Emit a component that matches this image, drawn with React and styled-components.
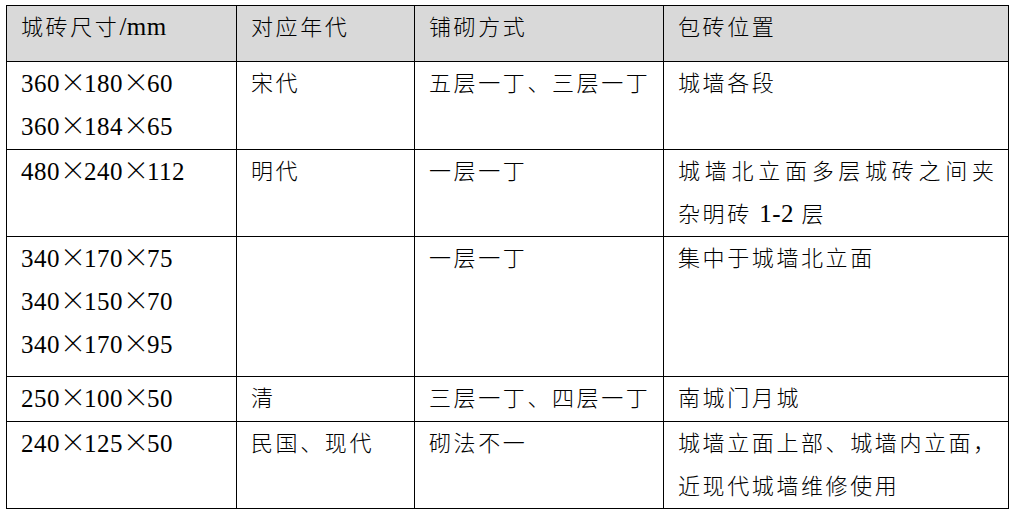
import React from "react";
import styled, { createGlobalStyle } from "styled-components";

const Global = createGlobalStyle`
  html, body { margin: 0; padding: 0; background: #ffffff; }
  body { font-family: "Liberation Serif", "Noto Sans CJK SC", serif; }
`;

const Page = styled.div`
  padding: 5px 0 0 6px;
`;

const Table = styled.table`
  border-collapse: collapse;
  table-layout: fixed;
  width: 1002px;
  border: 1px solid #000;
  color: #000;
`;

const Row = styled.tr`
  height: ${(p) => p.$h}px;
  background: ${(p) => (p.$head ? "#d9d9d9" : "#ffffff")};
`;

const Cell = styled.td`
  border: 1px solid #000;
  vertical-align: top;
  padding: 0 14px 0 14px;
  font-family: "Noto Sans CJK SC", sans-serif;
  font-weight: 300;
  font-size: 22px;
  letter-spacing: 2.6px;
  line-height: 38px;
  text-align: left;
  white-space: nowrap;
  overflow: hidden;
`;

const HeadCell = styled(Cell).attrs({ as: "th" })`
  font-weight: 300;
`;

const Line = styled.div`
  display: block;
  height: 43px;
  text-align: ${(p) => (p.$spread ? "justify" : "left")};
  text-align-last: ${(p) => (p.$spread ? "justify" : "auto")};
  letter-spacing: ${(p) => (p.$spread ? "0px" : "2.6px")};
`;

const Num = styled.span`
  font-family: "Liberation Serif", serif;
  font-weight: 400;
  font-size: 25px;
  letter-spacing: 0.5px;
`;

const Times = styled.span`
  display: inline-block;
  width: 24px;
  text-align: center;
  font-family: "Noto Sans CJK SC", sans-serif;
  font-weight: 300;
  font-size: 26px;
  letter-spacing: 0;
`;

const Dim = ({ v }) => {
  const parts = v.split("x");
  return (
    <Line>
      {parts.map((p, i) => (
        <React.Fragment key={i}>
          {i > 0 && <Times>×</Times>}
          <Num>{p}</Num>
        </React.Fragment>
      ))}
    </Line>
  );
};

const rows = [
  {
    h: 88,
    cells: [
      [<Dim key="a" v="360x180x60" />, <Dim key="b" v="360x184x65" />],
      [<Line key="a">宋代</Line>],
      [<Line key="a">五层一丁、三层一丁</Line>],
      [<Line key="a">城墙各段</Line>],
    ],
  },
  {
    h: 87,
    cells: [
      [<Dim key="a" v="480x240x112" />],
      [<Line key="a">明代</Line>],
      [<Line key="a">一层一丁</Line>],
      [
        <Line key="a" $spread>
          城墙北立面多层城砖之间夹
        </Line>,
        <Line key="b">
          杂明砖 <Num>1-2</Num> 层
        </Line>,
      ],
    ],
  },
  {
    h: 140,
    cells: [
      [
        <Dim key="a" v="340x170x75" />,
        <Dim key="b" v="340x150x70" />,
        <Dim key="c" v="340x170x95" />,
      ],
      [],
      [<Line key="a">一层一丁</Line>],
      [<Line key="a">集中于城墙北立面</Line>],
    ],
  },
  {
    h: 45,
    cells: [
      [<Dim key="a" v="250x100x50" />],
      [<Line key="a">清</Line>],
      [<Line key="a">三层一丁、四层一丁</Line>],
      [<Line key="a">南城门月城</Line>],
    ],
  },
  {
    h: 87,
    cells: [
      [<Dim key="a" v="240x125x50" />],
      [<Line key="a">民国、现代</Line>],
      [<Line key="a">砌法不一</Line>],
      [
        <Line key="a">城墙立面上部、城墙内立面，</Line>,
        <Line key="b">近现代城墙维修使用</Line>,
      ],
    ],
  },
];

export default function App() {
  return (
    <Page>
      <Global />
      <Table>
        <colgroup>
          <col style={{ width: 230 }} />
          <col style={{ width: 178 }} />
          <col style={{ width: 249 }} />
          <col style={{ width: 345 }} />
        </colgroup>
        <thead>
          <Row $h={56} $head>
            <HeadCell>
              <Line>
                城砖尺寸<Num>/mm</Num>
              </Line>
            </HeadCell>
            <HeadCell>
              <Line>对应年代</Line>
            </HeadCell>
            <HeadCell>
              <Line>铺砌方式</Line>
            </HeadCell>
            <HeadCell>
              <Line>包砖位置</Line>
            </HeadCell>
          </Row>
        </thead>
        <tbody>
          {rows.map((r, i) => (
            <Row key={i} $h={r.h}>
              {r.cells.map((c, j) => (
                <Cell key={j}>{c}</Cell>
              ))}
            </Row>
          ))}
        </tbody>
      </Table>
    </Page>
  );
}
